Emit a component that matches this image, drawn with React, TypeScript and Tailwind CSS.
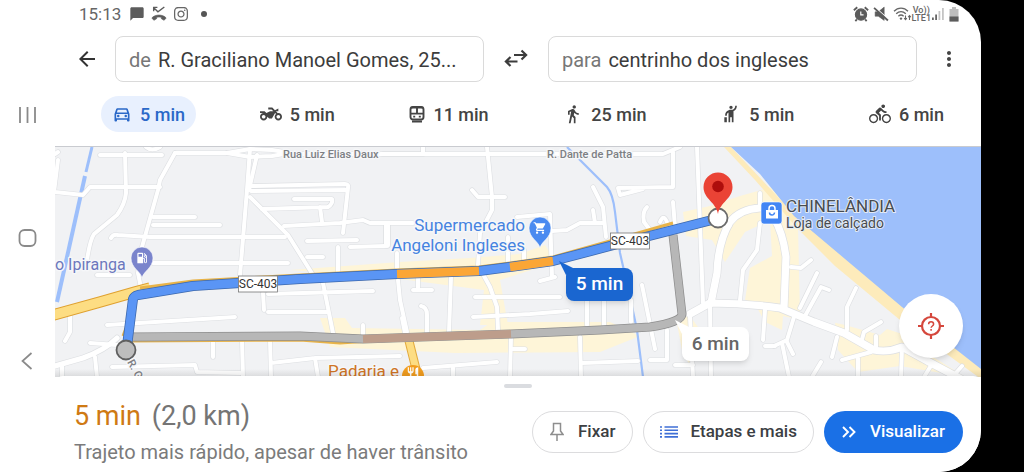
import type { ReactNode } from "react";
import {
  MdArrowBack,
  MdChatBubble,
  MdDirectionsBike,
  MdDirectionsWalk,
  MdHail,
  MdLocalGasStation,
  MdMoreVert,
  MdOutlineDirectionsCar,
  MdRestaurant,
  MdShoppingCart,
  MdTwoWheeler,
} from "react-icons/md";
import { FaInstagram } from "react-icons/fa6";

/* ---------- Status bar ---------- */

function MissedCallIcon() {
  return (
    <svg viewBox="0 0 15 15" className="h-4 w-4" fill="none" stroke="#5c5c5c">
      <path d="M2.500 1v4M2 1.300h4M2.300 1.500 6.500 5.500 12.500 1" strokeWidth="1.300" />
      <path
        d="M.8 11.200C4 7.600 11 7.600 14.200 11.200l-1.900 2.200-2.600-1.500V10.600c-1.400-.4-3-.4-4.400 0v1.300l-2.600 1.500z"
        fill="#5c5c5c"
        strokeWidth=".6"
      />
    </svg>
  );
}

function AlarmIcon() {
  return (
    <svg viewBox="0 0 15 15" className="h-4 w-4" fill="none" stroke="#5c5c5c">
      <circle cx="7.500" cy="8" r="5.300" fill="#5c5c5c" />
      <path d="M.8 4 4 1.200M14.200 4 11 1.200M3.600 12.600l-1.400 1.600M11.400 12.600l1.400 1.600" strokeWidth="1.700" />
      <path d="M7.300 5.200v3.200h2.600" stroke="#fff" strokeWidth="1.100" />
    </svg>
  );
}

function MuteIcon() {
  return (
    <svg viewBox="0 0 15 15" className="h-4 w-4" fill="#5c5c5c" stroke="#5c5c5c">
      <path d="M2 5.500h3L10.500 1v12.500L5 9.600H2z" strokeWidth=".5" />
      <path d="M1.800 1 14.500 12.400" stroke="#fff" strokeWidth="1" />
      <path d="M1 1.800 14 13.600" strokeWidth="1.700" />
    </svg>
  );
}

function WifiIcon() {
  return (
    <svg viewBox="0 0 19 16" className="h-4 w-[19px]" fill="none" stroke="#666" strokeWidth="1.300">
      <path d="M1 5.300C5 1 11 1 15 5.300M3.200 7.800c3-3 6.600-3 9.600 0M5.400 10.200c1.800-1.600 3.400-1.600 5.200 0" />
      <circle cx="8" cy="12.600" r="1.200" fill="#666" stroke="none" />
      <path d="M12.500 9.500v4M11.200 12.200l1.300 1.500 1.300-1.500M16.500 14V9.800M15.200 11.200l1.300-1.500 1.300 1.500" strokeWidth="1.100" />
    </svg>
  );
}

function SignalIcon() {
  return (
    <svg viewBox="0 0 14 14" className="h-3.5 w-3.5">
      <path d="M1 10.500h1.800V13H1zM4.200 7.500H6V13H4.200z" fill="#666" />
      <path d="M7.500 4h1.800v9H7.500zM11 1h1.800v12H11z" fill="#c4c4c4" />
    </svg>
  );
}

function BatteryIcon() {
  return (
    <svg viewBox="0 0 10 15" className="h-[15px] w-2.5">
      <path d="M3 0h4v2h2.500v12.500h-9V2H3z" fill="#bdbdbd" />
      <path d="M.5 9.500h9v5h-9z" fill="#5c5c5c" />
    </svg>
  );
}

function StatusBar() {
  return (
    <div className="flex h-7 items-center justify-between pr-[22px] pl-6 text-[#666]">
      <div className="flex items-center">
        <span className="text-[17px] leading-5">15:13</span>
        <MdChatBubble className="ml-2 h-4 w-4 text-[#5c5c5c]" />
        <span className="ml-1.5">
          <MissedCallIcon />
        </span>
        <FaInstagram className="ml-1.5 h-4 w-4" />
        <span className="ml-3 h-1.5 w-1.5 rounded-full bg-[#555]" />
      </div>
      <div className="flex items-center">
        <AlarmIcon />
        <span className="ml-1">
          <MuteIcon />
        </span>
        <span className="ml-1">
          <WifiIcon />
        </span>
        <span className="flex flex-col items-center text-[9px] leading-2 font-medium">
          <span>Vo))</span>
          <span>LTE1</span>
        </span>
        <SignalIcon />
        <span className="ml-1">
          <BatteryIcon />
        </span>
      </div>
    </div>
  );
}

/* ---------- Origin and destination ---------- */

function PlaceField({ id, label, value }: { id: string; label: string; value: string }) {
  return (
    <div className="flex h-[46px] min-w-0 flex-1 items-center gap-[7px] rounded-lg border border-[#dadada] px-[13px] pt-0.5 text-[20px]">
      <label htmlFor={id} className="text-[#777]">
        {label}
      </label>
      <input
        id={id}
        type="text"
        defaultValue={value}
        className="w-full min-w-0 flex-1 bg-transparent text-[#3c3c3c] outline-none"
      />
    </div>
  );
}

function SwapIcon() {
  return (
    <svg viewBox="0 0 24 20" className="h-5 w-6" fill="none" stroke="#3c3c3c" strokeWidth="2.200">
      <path d="M10 6h12M17.500 1.500l4.600 4.500-4.600 4.500M13.500 12.500H2M6.500 8 1.900 12.500l4.600 4.500" />
    </svg>
  );
}

function SearchRow() {
  return (
    <div className="mt-2 flex items-center pr-5 pl-5">
      <button type="button" aria-label="Voltar" className="mr-4 text-[#333]">
        <MdArrowBack className="h-6 w-6" />
      </button>
      <PlaceField id="origem" label="de" value="R. Graciliano Manoel Gomes, 25..." />
      <button type="button" aria-label="Inverter" className="mx-5">
        <SwapIcon />
      </button>
      <PlaceField id="destino" label="para" value="centrinho dos ingleses" />
      <button type="button" aria-label="Mais opções" className="ml-5 text-[#444]">
        <MdMoreVert className="h-6 w-6" />
      </button>
    </div>
  );
}

/* ---------- Travel modes ---------- */

function TrainIcon() {
  return (
    <svg viewBox="0 0 16 18" className="h-[18px] w-4" fill="none" stroke="#444" strokeWidth="1.900">
      <rect x="1.500" y="2" width="13" height="12.500" rx="2.500" />
      <path d="M2.500 2.500h11M2 8.600h12M8 3v5.500M3 16.500h10" />
      <path d="M4.200 11.600h2M9.800 11.600h2" />
    </svg>
  );
}

const modes: { name: string; time: string; icon: ReactNode; active?: boolean }[] = [
  { name: "Carro", time: "5 min", icon: <MdOutlineDirectionsCar className="h-5 w-5" />, active: true },
  { name: "Moto", time: "5 min", icon: <MdTwoWheeler className="h-[22px] w-[22px]" /> },
  { name: "Transporte público", time: "11 min", icon: <TrainIcon /> },
  { name: "A pé", time: "25 min", icon: <MdDirectionsWalk className="h-5 w-5" /> },
  { name: "Táxi", time: "5 min", icon: <MdHail className="h-5 w-5" /> },
  { name: "Bicicleta", time: "6 min", icon: <MdDirectionsBike className="h-[22px] w-[22px]" /> },
];

function ModeTabs() {
  return (
    <div role="tablist" className="mt-3.5 mb-3.5 flex justify-between pr-[26px] pl-[46px]">
      {modes.map((m) => (
        <button
          key={m.name}
          type="button"
          role="tab"
          aria-label={`${m.name} ${m.time}`}
          aria-selected={!!m.active}
          className={
            m.active
              ? "flex h-9 items-center gap-2 rounded-full bg-[#e8f0fe] px-[11px] text-[18px] font-medium text-[#2a68c8]"
              : "flex h-9 items-center gap-2 rounded-full px-[11px] text-[18px] font-medium text-[#444]"
          }
        >
          {m.icon}
          {m.time}
        </button>
      ))}
    </div>
  );
}

/* ---------- Map ---------- */

const mainRoads = [
  "M690 314 710 303Q745 303 780 308L814 322 844 333 874 350Q888 353 902 347L931 363 961 379",
  "M775 208H760Q740 209 730 222 718 242 717 273L711 303",
  "M774 218Q783 233 786 257L784 307",
];

const streets = [
  "M55 154 58 152M100 155H162M175 153H227L250 149 272 150 297 154H663L680 147",
  "M227 153 250 157 272 156 290 153M146 147Q152 152 160 147",
  "M175 153 160 180 158 190 142 247 138 273 141 288",
  "M55 192 83 195 90 187H160M58 160 54 192",
  "M125 153 126 193Q125 204 117 215L94 234Q90 240 87 260",
  "M153 217H195M153 225H220M111 238Q113 234 118 235L150 237H285M153 263H288M97 275H130",
  "M250 149 247 190 240 275M257 155 249 190",
  "M251 186 345 184Q349 184 348 188L343 233M251 191 346 190",
  "M250 197 288 235 313 275",
  "M262 209 328 207Q333 204 332 199L294 199M320 207 322 222",
  "M284 226 340 223 363 220 370 223H413",
  "M350 247 385 246M307 241 357 240M307 257H323M338 247V272M397 253V268",
  "M398 280 400 300 407 332M405 333 402 318M268 294 373 291M263 293 264 310M268 312H328M323 283 333 333",
  "M418 278V290M413 290H432M421 306Q427 307 427 315V332M451 277 449 332M363 325V337",
  "M383 154H423V147M487 147 492 197V210L480 233 478 265 490 287 497 307 498 330",
  "M472 190 478 197H505M475 297H560M473 317 530 314 568 311",
  "M517 217 550 214 552 277M540 281 555 277M508 237V262M524 250V262",
  "M552 231 567 230 580 223H603M593 187 603 207 606 237M593 210 595 223",
  "M673 152V187L618 188 620 195 643 189",
  "M647 207Q642 212 644 222L650 230M660 222Q664 212 668 225M673 202 675 227",
  "M697 147 703 303M642 285 655 349M587 300V325M604 300V325M631 300V322",
  "M667 330V360H650M580 337 581 377M582 363 638 361",
  "M760 193V207M760 223 757 250 743 270 740 300",
  "M690 317 693 377M675 365H693M710 307 711 377M765 310 763 340",
  "M730 225 722 212M791 267 801 268 811 260M817 273 800 308M829 290 821 287 805 316",
  "M856 288 847 307V330M881 322 864 332 861 343M876 336V348",
  "M794 317 787 340 774 346M782 343 789 377M837 337 832 357M787 342 793 354",
  "M842 360 871 352M858 358V377M902 347 901 377M821 362 812 377M955 374 962 366M932 364 924 377",
  "M70 313V332L65 341M107 325 235 317M90 343 117 345M62 366V377M95 357 97 377",
  "M112 367 195 365 197 372 240 373M213 340V357M242 340 243 377M270 340 271 377M271 363 315 358 400 356M315 358 318 377",
  "M423 368 497 362M453 367V377M511 337 510 377M513 349H525M775 346H765",
];

const routeBlue = "M127 346 133 299Q134 296 138 295L193 286 300 279 397 274 479 271 510 267 553 261 610 246 712 220";
const routeGray = "M130 337 300 336 363 339 511 334 600 330 650 327Q682 322 682 314L673 235";

function Streets() {
  return (
    <g fill="none" strokeLinecap="round" strokeLinejoin="round">
      {streets.map((d) => (
        <path key={d} d={d} stroke="#dddfe2" strokeWidth="5.200" />
      ))}
      {mainRoads.map((d) => (
        <path key={d} d={d} stroke="#dddfe2" strokeWidth="8.500" />
      ))}
      <path d="M55 366 83 358Q105 350 117 338" stroke="#dddfe2" strokeWidth="6.500" />
      <path d="M387 225V245" stroke="#dddfe2" strokeWidth="7.500" />
      {streets.map((d) => (
        <path key={d} d={d} stroke="#fff" strokeWidth="4" />
      ))}
      {mainRoads.map((d) => (
        <path key={d} d={d} stroke="#fff" strokeWidth="7.200" />
      ))}
      <path d="M55 366 83 358Q105 350 117 338" stroke="#fff" strokeWidth="5.200" />
      <path d="M387 225V245" stroke="#fff" strokeWidth="6" />
    </g>
  );
}

function RoadShield({ x, y }: { x: number; y: number }) {
  return (
    <g>
      <rect x={x - 19.5} y={y - 8} width="39" height="16" fill="#fff" stroke="#777" strokeWidth=".8" />
      <text x={x} y={y + 4} textAnchor="middle" fontSize="12" fill="#333">
        SC-403
      </text>
    </g>
  );
}

function PlacePin({ x, y, color, children }: { x: number; y: number; color: string; children: ReactNode }) {
  return (
    <g transform={`translate(${x} ${y})`}>
      <path
        d="M0 18C-1.500 11-11 8-11-2A11 11 0 0 1 11-2C11 8 1.500 11 0 18z"
        fill={color}
        stroke="#fff"
        strokeWidth=".6"
      />
      <g transform="translate(-7 -9)" color="#fff">
        {children}
      </g>
    </g>
  );
}

function MapCanvas() {
  return (
    <svg
      viewBox="55 147 926 230"
      preserveAspectRatio="xMidYMid slice"
      className="block h-[230px] w-full"
      role="img"
      aria-label="Mapa do trajeto"
    >
      <rect x="55" y="147" width="926" height="230" fill="#f1f2f4" />

      <g fill="#fef5d8">
        <path d="M320 318 345 318 352 328 480 330 492 322 610 322 640 336 600 352 455 353 330 347z" />
        <path d="M290 270 400 262 470 258 520 254 545 245 556 262 500 280 508 325 480 325 484 290 400 279z" />
        <path d="M683 212 710 206 740 196 775 186 800 226 800 320 783 316 782 330 765 322 755 304 745 300 750 268 772 256 770 220 745 232 725 262 712 240 686 236z" />
        <path d="M835 322 860 320 905 335 930 355 965 377 900 366 858 372 838 350z" />
        <path d="M676 318 690 316 700 330 692 370 682 350z" />
      </g>
      <path d="M798 226 900 318 880 335 845 325 800 315z" fill="#f1f2f4" />
      <path d="M724 147 755 180 798 229 835 266 900 320 981 379V366L902 305 794 214 731 147z" fill="#fdebbb" />
      <path d="M731 147 760 174 794 216 902 307 981 369V147z" fill="#9dbffb" />

      <path d="M92 147 86 172" stroke="#9dbffb" strokeWidth="3" />
      <path d="M85 176 57 302" stroke="#9dbffb" strokeWidth="4" />
      <path d="M567 147 607 187Q613 194 615 212L620 253 630 297 637 330 643 377" fill="none" stroke="#9dbffb" strokeWidth="2.200" />

      <Streets />

      {/* Highway under the routes */}
      <g fill="none">
        <path d="M53 315 100 302 135 292 150 288" stroke="#dfa02f" strokeWidth="11.500" />
        <path d="M53 315 100 302 135 292 150 288" stroke="#fddd83" strokeWidth="9.500" />
        <path d="M140 288 193 281 300 275 397 270 479 267 510 263 553 257 610 241 645 231 673 223" stroke="#e8b348" strokeWidth="3" />
        <path d="M409 341 418 377" stroke="#e2a93c" strokeWidth="9" />
        <path d="M409 341 418 377" stroke="#fddd83" strokeWidth="7" />
        <path d="M123 336 126 328M128 341 300 340 340 343 370 341" stroke="#e8b348" strokeWidth="3" />
      </g>

      {/* Alternative route */}
      <g fill="none" strokeLinejoin="round">
        <path d={routeGray} stroke="#8e8e8e" strokeWidth="9" />
        <path d={routeGray} stroke="#b7b7b7" strokeWidth="7.500" />
        <path d="M363 339 511 334" stroke="#bd9d8b" strokeWidth="8" />
      </g>

      {/* Main route with traffic */}
      <g fill="none" strokeLinejoin="round">
        <path d={routeBlue} stroke="#3c68ad" strokeWidth="10" />
        <path d={routeBlue} stroke="#5a95f5" strokeWidth="8.500" />
        <path d="M397 274 479 271M510 267 553 261" stroke="#fba636" strokeWidth="8.500" />
      </g>

      <circle cx="126" cy="350" r="9.500" fill="#bdbdbd" stroke="#5f5f5f" strokeWidth="1.800" />
      <circle cx="718" cy="218" r="9.500" fill="#fff" stroke="#6b6b6b" strokeWidth="1.800" />
      <path d="M718 214C716 202 703.500 199 703.500 187a14.500 14.500 0 0 1 29 0C732.500 199 720 202 718 214z" fill="#ea4335" />
      <circle cx="718" cy="186.500" r="5.800" fill="#ae0d0c" />

      <RoadShield x={258} y={284} />
      <RoadShield x={630} y={241} />

      <PlacePin x={142} y={260} color="#7a84cc">
        <MdLocalGasStation size={14} />
      </PlacePin>
      <PlacePin x={540} y={230} color="#4a8af0">
        <MdShoppingCart size={14} />
      </PlacePin>
      <g color="#fff">
        <circle cx="413" cy="376" r="11" fill="#f29d1f" />
        <MdRestaurant x={406} y={366} size={14} />
        <rect x="761" y="202" width="21" height="22" rx="3" fill="#4285f4" stroke="#fff" strokeWidth=".6" />
        <path d="M766 210h12v8.500h-12z" fill="#fff" />
        <path d="M769 210v-1.500a3 3 0 0 1 6 0v1.500" fill="none" stroke="#fff" strokeWidth="1.500" />
        <path d="M769.500 212.500a2.500 2.500 0 0 0 5 0" fill="none" stroke="#4285f4" strokeWidth="1.500" />
      </g>

      <g stroke="#f6f7f9" strokeWidth="3" strokeLinejoin="round" paintOrder="stroke">
        <g fontSize="11" fontWeight="500" fill="#7d8084">
          <text x="283" y="158">Rua Luiz Elias Daux</text>
          <text x="547" y="158">R. Dante de Patta</text>
          <text transform="translate(127 362) rotate(62)">R. G</text>
        </g>
        <g fontSize="16">
          <text x="55" y="270" fill="#6c77bd">o Ipiranga</text>
          <g fontSize="17" fill="#4583e0" textAnchor="end">
            <text x="525" y="231">Supermercado</text>
            <text x="525" y="251">Angeloni Ingleses</text>
          </g>
          <text x="328" y="377" fontSize="17" fill="#cf7425">Padaria e</text>
        </g>
        <g fill="#474b51" stroke="#e4ebf6" strokeWidth="2">
          <text x="786" y="212" fontSize="17">CHINELÂNDIA</text>
          <text x="786" y="228" fontSize="14">Loja de calçado</text>
        </g>
      </g>
    </svg>
  );
}

function LocateIcon() {
  return (
    <svg viewBox="0 0 26 26" className="h-[26px] w-[26px]" fill="none" stroke="#d5473c" strokeWidth="2.200">
      <circle cx="13" cy="13" r="9" />
      <path d="M13 0v4M13 22v4M0 13h4M22 13h4" />
      <path d="M10.600 11.200c0-3.200 5-3.200 5 0 0 1.800-2.500 1.800-2.500 3.600M13.100 16v1.700" strokeWidth="1.500" />
    </svg>
  );
}

function RouteMap() {
  return (
    <div className="relative overflow-hidden border-t border-[#c9cbd0]">
      <MapCanvas />
      <button
        type="button"
        className="absolute top-[121px] left-[511px] h-[33px] w-[67px] rounded-lg bg-[#1a66d0] text-[19px] font-medium text-white shadow-md"
      >
        <svg viewBox="0 0 18 14" className="absolute -top-[7px] -left-[7px] h-3.5 w-[18px]" fill="#1a66d0">
          <path d="M0 0 16 8 7 14z" />
        </svg>
        <span className="relative">5 min</span>
      </button>
      <button
        type="button"
        className="absolute top-[180px] left-[627px] h-[34px] w-[67px] rounded-lg bg-white text-[19px] font-medium text-[#666] shadow-md"
      >
        <svg viewBox="0 0 18 14" className="absolute -top-[7px] -left-[7px] h-3.5 w-[18px]" fill="#fff">
          <path d="M0 0 16 8 7 14z" />
        </svg>
        <span className="relative">6 min</span>
      </button>
      <button
        type="button"
        aria-label="Minha localização"
        className="absolute top-[147px] right-[18px] flex h-16 w-16 items-center justify-center rounded-full bg-white shadow-md"
      >
        <LocateIcon />
      </button>
      <div className="absolute inset-x-0 bottom-0 h-2 bg-linear-to-t from-black/10 to-transparent" />
    </div>
  );
}

/* ---------- Bottom sheet ---------- */

function PinIcon() {
  return (
    <svg viewBox="0 0 14 20" className="h-5 w-3.5" fill="none" stroke="#8e8e8e" strokeWidth="1.500">
      <path d="M3.500 1.500h7V9l2.500 3.500H1L3.500 9zM7 12.500V19" />
    </svg>
  );
}

function StepsIcon() {
  return (
    <svg viewBox="0 0 18 12" className="h-3 w-[18px]" stroke="#3f6fd6" strokeWidth="1.600">
      <path d="M4.500 1H18M4.500 4.300H18M4.500 7.600H18M4.500 10.900H18M0 1h2M0 4.300h2M0 7.600h2M0 10.900h2" />
    </svg>
  );
}

function ChevronsIcon() {
  return (
    <svg viewBox="0 0 14 12" className="h-3 w-3.5" fill="none" stroke="#fff" strokeWidth="1.900">
      <path d="M1 1l5 5-5 5M7.500 1l5 5-5 5" />
    </svg>
  );
}

function BottomSheet() {
  return (
    <div className="relative -mt-px flex-1 rounded-t-lg bg-white pt-2">
      <div className="mx-auto h-1 w-7 rounded-full bg-[#dadce0]" />
      <div className="flex items-center justify-between pr-[18px] pl-[19px]">
        <div>
          <p className="mt-2.5 text-[27px] leading-9 text-[#757575]">
            <span className="text-[#cf7a14]">5 min</span> <span className="ml-1">(2,0 km)</span>
          </p>
          <p className="text-[20px] leading-9 text-[#7b7b7b]">Trajeto mais rápido, apesar de haver trânsito</p>
        </div>
        <div className="mt-1.5 flex gap-2.5 text-[17px] font-medium">
          <button
            type="button"
            className="flex h-[42px] items-center gap-3.5 rounded-full border border-[#dcdcde] px-[17px] text-[#3c4043]"
          >
            <PinIcon />
            Fixar
          </button>
          <button
            type="button"
            className="flex h-[42px] items-center gap-3 rounded-full border border-[#dcdcde] px-4 text-[#3c4043]"
          >
            <StepsIcon />
            Etapas e mais
          </button>
          <button type="button" className="flex h-[42px] items-center gap-3.5 rounded-full bg-[#1a70e6] px-[18px] text-white">
            <ChevronsIcon />
            Visualizar
          </button>
        </div>
      </div>
    </div>
  );
}

/* ---------- System navigation ---------- */

function SystemNav() {
  return (
    <nav className="flex w-[55px] shrink-0 flex-col items-center justify-center gap-[103px] pt-1">
      <button type="button" aria-label="Recentes">
        <svg viewBox="0 0 20 20" className="h-5 w-5" stroke="#8a8a8a" strokeWidth="1.800">
          <path d="M2 2v16M9.500 2v16M17 2v16" />
        </svg>
      </button>
      <button type="button" aria-label="Início">
        <svg viewBox="0 0 20 20" className="h-5 w-5" fill="none" stroke="#8a8a8a" strokeWidth="1.800">
          <rect x="1.500" y="2" width="16" height="16" rx="5" />
        </svg>
      </button>
      <button type="button" aria-label="Voltar ao anterior">
        <svg viewBox="0 0 20 20" className="h-5 w-5" fill="none" stroke="#8a8a8a" strokeWidth="1.700">
          <path d="M13.500 2 4.500 10l9 8" />
        </svg>
      </button>
    </nav>
  );
}

export default function App() {
  return (
    <div className="min-h-screen bg-black pr-[43px] font-['Roboto',sans-serif]">
      <div className="flex min-h-screen overflow-hidden rounded-r-[42px] bg-white">
        <SystemNav />
        <main className="flex min-w-0 flex-1 flex-col">
          <StatusBar />
          <SearchRow />
          <ModeTabs />
          <RouteMap />
          <BottomSheet />
        </main>
      </div>
    </div>
  );
}
